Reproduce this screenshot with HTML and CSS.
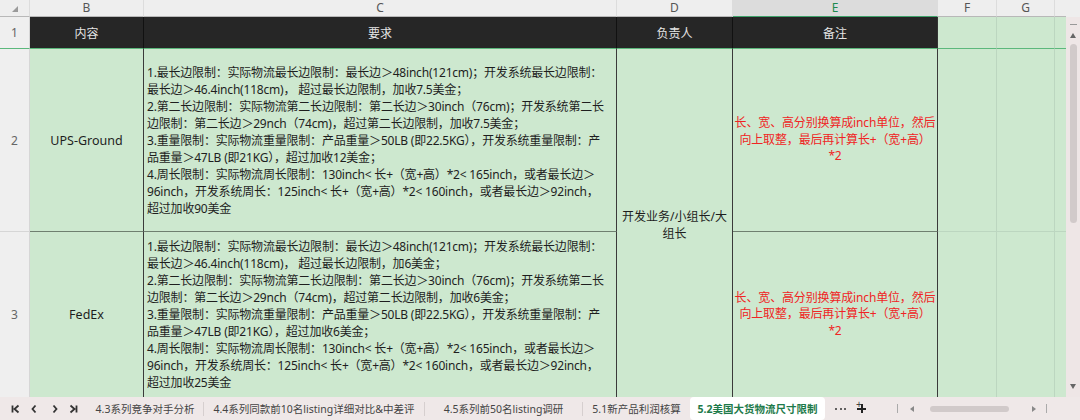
FILE: index.html
```html
<!DOCTYPE html>
<html lang="zh-CN">
<head>
<meta charset="utf-8">
<title>5.2美国大货物流尺寸限制</title>
<link rel="stylesheet" href="styles.css">
</head>
<body>
<div class="app">
  <div class="sheet">
    <!-- column header row -->
    <div class="ch corner"><span class="tri"></span></div>
    <div class="ch">B</div>
    <div class="ch">C</div>
    <div class="ch">D</div>
    <div class="ch ch-sel">E</div>
    <div class="ch">F</div>
    <div class="ch">G</div>
    <div class="ch ch-last"></div>
    <div class="ch ch-sb"></div>

    <!-- row 1 -->
    <div class="rh r1">1</div>
    <div class="hd">内容</div>
    <div class="hd">要求</div>
    <div class="hd">负责人</div>
    <div class="hd hd-last">备注</div>
    <div class="gc r1"></div>
    <div class="gc r1"></div>
    <div class="gc gc-last r1"></div>

    <div class="vscroll">
      <span class="vs-dash"></span>
      <span class="vs-up"></span>
      <span class="vs-thumb"></span>
      <span class="vs-fill"></span>
      <span class="vs-down"></span>
    </div>

    <!-- row 2 -->
    <div class="rh r2">2</div>
    <div class="tc name r2">UPS-Ground</div>
    <div class="tc req r2">
      <div class="lines">
        <div>1.最长边限制：实际物流最长边限制：最长边＞48inch(121cm)；开发系统最长边限制：</div>
        <div>最长边＞46.4inch(118cm)， 超过最长边限制，加收7.5美金；</div>
        <div>2.第二长边限制：实际物流第二长边限制：第二长边＞30inch（76cm)；开发系统第二长</div>
        <div>边限制：第二长边＞29nch（74cm)，超过第二长边限制，加收7.5美金；</div>
        <div>3.重量限制：实际物流重量限制：产品重量＞50LB (即22.5KG），开发系统重量限制：产</div>
        <div>品重量＞47LB (即21KG），超过加收12美金；</div>
        <div>4.周长限制：实际物流周长限制：130inch&lt; 长+（宽+高）*2&lt; 165inch，或者最长边＞</div>
        <div>96inch，开发系统周长：125inch&lt; 长+（宽+高）*2&lt; 160inch，或者最长边＞92inch，</div>
        <div>超过加收90美金</div>
      </div>
    </div>
    <div class="tc owner">开发业务/小组长/大组长</div>
    <div class="tc note r2">长、宽、高分别换算成inch单位，然后<br>向上取整，最后再计算长+（宽+高）<br>*2</div>
    <div class="gc r2"></div>
    <div class="gc r2"></div>
    <div class="gc gc-last r2"></div>

    <!-- row 3 -->
    <div class="rh r3">3</div>
    <div class="tc name r3">FedEx</div>
    <div class="tc req r3">
      <div class="lines">
        <div>1.最长边限制：实际物流最长边限制：最长边＞48inch(121cm)；开发系统最长边限制：</div>
        <div>最长边＞46.4inch(118cm)， 超过最长边限制，加6美金；</div>
        <div>2.第二长边限制：实际物流第二长边限制：第二长边＞30inch（76cm)；开发系统第二长</div>
        <div>边限制：第二长边＞29nch（74cm)，超过第二长边限制，加收6美金；</div>
        <div>3.重量限制：实际物流重量限制：产品重量＞50LB (即22.5KG），开发系统重量限制：产</div>
        <div>品重量＞47LB (即21KG），超过加收6美金；</div>
        <div>4.周长限制：实际物流周长限制：130inch&lt; 长+（宽+高）*2&lt; 165inch，或者最长边＞</div>
        <div>96inch，开发系统周长：125inch&lt; 长+（宽+高）*2&lt; 160inch，或者最长边＞92inch，</div>
        <div>超过加收25美金</div>
      </div>
    </div>
    <div class="tc note r3">长、宽、高分别换算成inch单位，然后<br>向上取整，最后再计算长+（宽+高）<br>*2</div>
    <div class="gc r3"></div>
    <div class="gc r3"></div>
    <div class="gc gc-last r3"></div>
  </div>

  <div class="tabbar">
    <div class="nav">
      <svg class="nv nv-first" width="9" height="10" viewBox="0 0 9 10"><path d="M1.5 1.5v7M7.5 1.5L3.5 5l4 3.5" fill="none" stroke="#333" stroke-width="1.8"/></svg>
      <svg class="nv nv-prev" width="6" height="10" viewBox="0 0 6 10"><path d="M4.5 1.5L1.5 5l3 3.5" fill="none" stroke="#333" stroke-width="1.8"/></svg>
      <svg class="nv nv-next" width="6" height="10" viewBox="0 0 6 10"><path d="M1.5 1.5L4.5 5l-3 3.5" fill="none" stroke="#333" stroke-width="1.8"/></svg>
      <svg class="nv nv-last" width="9" height="10" viewBox="0 0 9 10"><path d="M1.5 1.5L5.5 5l-4 3.5M7.5 1.5v7" fill="none" stroke="#333" stroke-width="1.8"/></svg>
    </div>
    <div class="tab t1">4.3系列竞争对手分析</div>
    <div class="tab t2 sep">4.4系列同款前10名listing详细对比&amp;中差评</div>
    <div class="tab t3 sep">4.5系列前50名listing调研</div>
    <div class="tab t4 sep">5.1新产品利润核算</div>
    <div class="tab active">5.2美国大货物流尺寸限制</div>
    <div class="more"><i></i><i></i><i></i></div>
    <div class="plus">+</div>
    <div class="hscroll">
      <span class="hs-bar"></span>
      <span class="hs-left"></span>
      <span class="hs-thumb"></span>
      <span class="hs-right"></span>
      <span class="hs-bar hs-bar2"></span>
    </div>
  </div>
</div>
</body>
</html>
```

FILE: styles.css
```css
* { box-sizing: border-box; }
html, body { margin: 0; padding: 0; }
body {
  width: 1080px;
  height: 420px;
  overflow: hidden;
  background: #cde8cf;
  font-family: "Noto Sans", "Noto Sans CJK SC", sans-serif;
  color: #222;
}
.app { width: 1080px; height: 420px; display: flex; flex-direction: column; }

.sheet {
  display: grid;
  grid-template-columns: 30px 114px 473px 116px 205px 59px 58px 11px 14px;
  grid-template-rows: 17px 32px 183px 165px;
  height: 397px;
}

/* column header */
.ch {
  background: #eeeeee;
  color: #555;
  font-size: 12px;
  line-height: 16px;
  text-align: center;
  border-right: 1px solid #dcdcdc;
  border-bottom: 1px solid #b8b8b8;
}
.ch-sel {
  background: #dcdcdc;
  color: #1c8a4e;
  border-bottom: 1px solid #3fa26a;
}
.ch-last { border-right: none; }
.ch-sb { border-right: none; border-bottom: none; }
.corner { position: relative; }
.tri {
  position: absolute;
  left: 12px;
  top: 6px;
  width: 0;
  height: 0;
  border-left: 6px solid transparent;
  border-bottom: 6px solid #9a9a9a;
}

/* row header */
.rh {
  background: #efefef;
  color: #666;
  font-size: 12px;
  display: flex;
  align-items: center;
  justify-content: center;
  border-bottom: 1px solid #d6d6d6;
  border-right: 1px solid #d6d6d6;
}
.rh.r1 { border-bottom: 1px solid #5cb87c; }
.rh.r3 { border-bottom: none; }

/* dark table header */
.hd {
  background: #262626;
  color: #e4e4e4;
  font-size: 12px;
  display: flex;
  align-items: center;
  justify-content: center;
  border-right: 1px solid #111;
  border-bottom: 1px solid #5cb87c;
}
.hd-last { border-right: 1px solid #333; }

/* plain green grid cells */
.gc {
  background: #cde8cf;
  border-right: 1px solid #bcd6c0;
  border-bottom: 1px solid #bcd6c0;
}
.gc.r1 { border-bottom: 1px solid #5cb87c; }
.gc.r3 { border-bottom: none; }
.gc-last { border-right: none; }

/* table cells */
.tc {
  background: #cde8cf;
  font-size: 12px;
  line-height: 17px;
  color: #1e1e1e;
  border-right: 1px solid #3a3a3a;
}
.tc.r2 { border-bottom: 1px solid #6f7f70; }
.name {
  display: flex;
  align-items: center;
  justify-content: center;
  font-size: 12.5px;
}
.req {
  display: flex;
  align-items: center;
  padding-left: 3px;
  overflow: hidden;
  letter-spacing: -0.2px;
}
.lines div { white-space: nowrap; }
.owner {
  grid-column: 4;
  grid-row: 3 / 5;
  display: flex;
  align-items: center;
  justify-content: center;
  text-align: center;
  padding: 4px 4px 0;
  line-height: 17px;
}
.note {
  display: flex;
  align-items: center;
  justify-content: center;
  text-align: center;
  color: #f02424;
  line-height: 16.5px;
  white-space: nowrap;
  letter-spacing: -0.15px;
}

/* vertical scrollbar */
.vscroll {
  grid-column: 9;
  grid-row: 2 / 5;
  background: #eee6e6;
  display: flex;
  flex-direction: column;
  align-items: center;
}
.vs-dash { width: 7px; height: 1px; background: #999; margin-top: 7px; }
.vs-up {
  width: 0; height: 0; margin-top: 8px;
  border-left: 3px solid transparent;
  border-right: 3px solid transparent;
  border-bottom: 5px solid #666;
}
.vs-thumb {
  width: 7px; height: 179px; margin-top: 6px;
  background: #d1caca; border-radius: 4px;
}
.vs-fill { flex: 1; }
.vs-down {
  width: 0; height: 0; margin-bottom: 8px;
  border-left: 3px solid transparent;
  border-right: 3px solid transparent;
  border-top: 5px solid #666;
}

/* tab bar */
.tabbar {
  height: 23px;
  background: #efe8e8;
  display: flex;
  align-items: center;
  font-size: 10.5px;
  color: #444;
}
.nav { width: 87px; height: 23px; position: relative; }
.nv { position: absolute; top: 7px; }
.nv-first { left: 11px; }
.nv-prev { left: 31px; }
.nv-next { left: 52px; }
.nv-last { left: 69px; }
.tab {
  height: 23px;
  display: flex;
  align-items: center;
  justify-content: center;
  white-space: nowrap;
}
.sep { border-left: 1px solid #d6cfcf; height: 14px; }
.t1 { width: 116px; }
.t2 { width: 221px; }
.t3 { width: 158px; }
.t4 { width: 108px; }
.active {
  width: 135px;
  background: #ffffff;
  color: #1d7a4a;
  font-weight: bold;
  border-radius: 4px;
}
.more {
  margin-left: 10px;
  width: 11px;
  display: flex;
  justify-content: space-between;
  align-items: center;
}
.more i {
  display: block;
  width: 2px;
  height: 2px;
  background: #333;
  border-radius: 1px;
}
.plus {
  margin-left: 10px;
  width: 10px;
  height: 23px;
  position: relative;
}
.plus::before, .plus::after {
  content: "";
  position: absolute;
  background: #222;
}
.plus::before { left: 1px; top: 11px; width: 9px; height: 2px; }
.plus::after { left: 4.5px; top: 7px; width: 2px; height: 9px; }
.hscroll {
  display: flex;
  align-items: center;
  margin-left: 31px;
  height: 23px;
}
.hs-bar { width: 1px; height: 9px; background: #aaa; }
.hs-left {
  margin-left: 12px;
  width: 0; height: 0;
  border-top: 3px solid transparent;
  border-bottom: 3px solid transparent;
  border-right: 4px solid #888;
}
.hs-thumb {
  margin-left: 16px;
  width: 79px; height: 6px;
  background: #d1caca; border-radius: 3px;
}
.hs-right {
  margin-left: 23px;
  width: 0; height: 0;
  border-top: 3px solid transparent;
  border-bottom: 3px solid transparent;
  border-left: 4px solid #888;
}
.hs-bar2 { margin-left: 10px; }
```
